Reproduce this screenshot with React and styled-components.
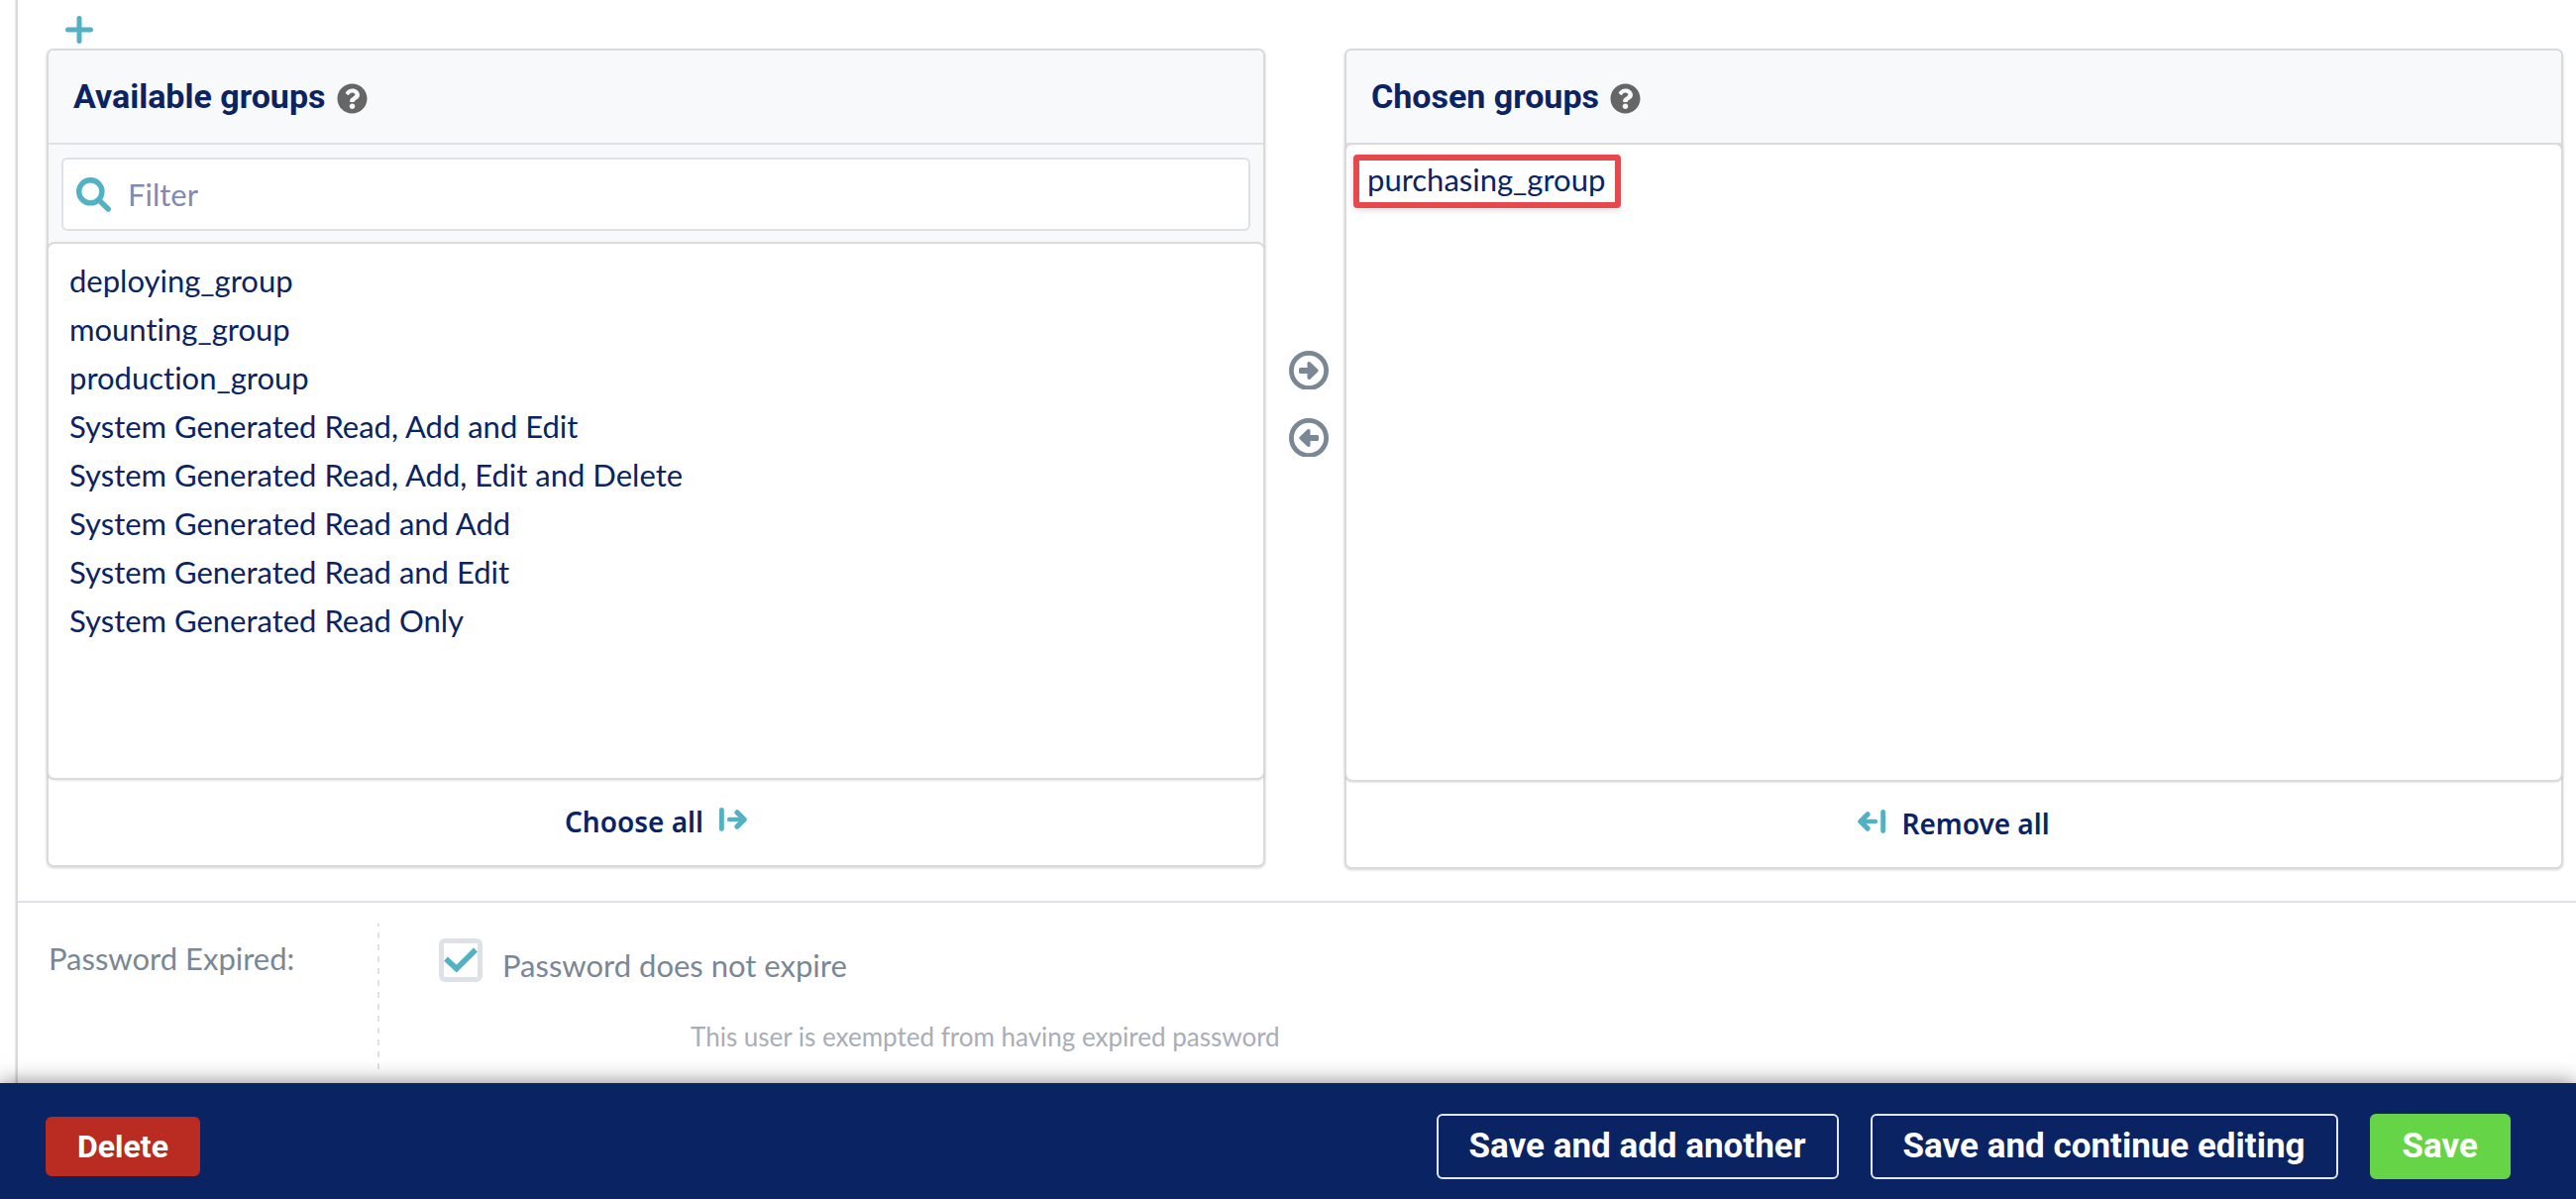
import React from 'react';
import styled, { createGlobalStyle } from 'styled-components';
import { FaQuestionCircle } from 'react-icons/fa';

const navy = '#0a2463';
const teal = '#52b2c3';
const slate = '#7a8794';
const line = '#dee2e6';
const edge = '#dadada';
const bodyFont = 'Lato, "Noto Sans", sans-serif';
const headFont = 'Roboto, "Noto Sans", sans-serif';

const GlobalStyle = createGlobalStyle`
  *, *::before, *::after { box-sizing: border-box; }
  body {
    margin: 0;
    background: #fff;
    color: ${navy};
    font-family: ${bodyFont};
    font-size: 31px;
    line-height: 38px;
    font-variant-ligatures: none;
  }
  svg { display: block; flex: none; }
`;

const Page = styled.div`
  display: flex;
  flex-direction: column;
  min-height: 100vh;
`;

const Form = styled.main`
  flex: 1;
  margin-left: 16px;
  border-left: 2px solid ${edge};
  box-shadow: -1px 0 1px rgba(0, 0, 0, 0.08);
`;

const IconButton = styled.button`
  display: block;
  padding: 0;
  border: 0;
  background: none;
  color: ${(p) => p.$color};
  cursor: pointer;
`;

const AddRow = styled.div`
  padding: 16px 48px 7px;
`;

const Selector = styled.section`
  display: flex;
  align-items: flex-start;
  padding: 0 15px 34px 31px;
  border-bottom: 2px solid ${line};
`;

const Panel = styled.div`
  flex: 1 1 0;
  min-width: 0;
  border-radius: 5px;
  background: #fff;
  box-shadow: 0 0 0 2px ${edge}, 0 1px 3px 2px rgba(0, 0, 0, 0.18);
`;

const PanelHeader = styled.header`
  display: flex;
  align-items: center;
  gap: 11px;
  height: 95px;
  padding: 0 25px;
  border-bottom: 2px solid ${line};
  border-radius: 5px 5px 0 0;
  background: #f8f9fb;
`;

const PanelTitle = styled.h2`
  margin: 0;
  padding-bottom: 2px;
  font: 700 34px/40px ${headFont};
`;

const HelpIcon = styled(FaQuestionCircle)`
  width: 31px;
  height: 31px;
  margin-top: 4px;
  color: #666;
`;

const FilterArea = styled.div`
  padding: 13px;
  background: #f8f9fb;
`;

const FilterBox = styled.label`
  display: flex;
  align-items: center;
  gap: 17px;
  height: 74px;
  padding: 0 13px;
  border: 2px solid ${line};
  border-radius: 6px;
  background: #fff;
`;

const FilterInput = styled.input`
  flex: 1;
  min-width: 0;
  padding: 0;
  border: 0;
  outline: 0;
  background: none;
  color: ${navy};
  font: 400 31px/38px ${bodyFont};
  &::placeholder { color: #7f8bb0; opacity: 1; }
`;

const GroupList = styled.select`
  display: block;
  position: relative;
  width: 100%;
  height: ${(p) => p.$height};
  padding: 10px 7px;
  border: 0;
  border-radius: 6px;
  outline: 0;
  overflow: hidden;
  appearance: none;
  background: #fff;
  box-shadow: 0 0 0 2px ${edge}, 0 1px 2px 2px rgba(0, 0, 0, 0.1);
  color: ${navy};
  font: 400 31px/38px ${bodyFont};
  font-variant-ligatures: none;
`;

const GroupOption = styled.option`
  height: 49px;
  padding: 8px 14px 4px;
`;

const MarkedOption = styled.option`
  width: fit-content;
  padding: 0 10px 4px 8px;
  border: 6px solid #e5484d;
  border-radius: 4px;
  box-shadow: 0 2px 6px rgba(0, 0, 0, 0.15);
`;

const PanelFooter = styled.footer`
  display: flex;
  align-items: center;
  justify-content: center;
  height: 88px;
`;

const AllLink = styled.a`
  display: flex;
  align-items: center;
  gap: 16px;
  color: ${navy};
  font: 600 28px/38px "Noto Sans", sans-serif;
  text-decoration: none;
`;

const Chooser = styled.div`
  display: flex;
  flex-direction: column;
  align-items: center;
  gap: 29px;
  width: 84px;
  padding: 303px 0 0 8px;
`;

const FieldRow = styled.section`
  display: flex;
  padding: 21px 31px 8px;
  color: ${slate};
`;

const FieldLabel = styled.div`
  width: 332px;
  padding-top: 16px;
`;

const Divider = styled.div`
  width: 2px;
  min-height: 153px;
  background: repeating-linear-gradient(${line} 0 3px, transparent 3px 9px, ${line} 9px 12px);
`;

const FieldBody = styled.div`
  padding: 15px 0 0 60px;
`;

const CheckLabel = styled.label`
  display: flex;
  gap: 20px;
`;

const CheckText = styled.span`
  padding-top: 8px;
`;

const CheckFrame = styled.span`
  display: grid;
  width: 44px;
  height: 44px;
  > * { grid-area: 1 / 1; }
  > svg { position: relative; pointer-events: none; visibility: hidden; }
  > input:checked + svg { visibility: visible; }
`;

const CheckInput = styled.input`
  width: 44px;
  height: 44px;
  margin: 0;
  appearance: none;
  border: 5px solid ${line};
  border-radius: 6px;
  background: #fff;
`;

const HelpText = styled.p`
  margin: 0;
  padding: 37px 0 0 254px;
  color: #a9adb8;
  font-size: 26px;
  line-height: 32px;
`;

const ActionBar = styled.footer`
  display: flex;
  align-items: center;
  position: relative;
  min-height: 117px;
  padding: 10px 66px 0 46px;
  background: ${navy};
  box-shadow: 0 0 20px rgba(0, 0, 0, 0.5);
`;

const ActionButton = styled.button`
  height: 66px;
  padding: 0 31px;
  border: 2px solid ${(p) => p.$border};
  border-radius: 6px;
  background: ${(p) => p.$fill};
  color: #fff;
  font: 700 35px/40px ${headFont};
  cursor: pointer;
`;

const DeleteButton = styled(ActionButton)`
  height: 60px;
  padding: 0 30px;
  font-size: 32px;
`;

const SaveGroup = styled.div`
  display: flex;
  gap: 32px;
  margin-left: auto;
`;

const PlusIcon = () => (
  <svg width="28" height="28" viewBox="0 0 28 28" fill="none" stroke="currentColor" strokeWidth="5" strokeLinecap="round">
    <path d="M14 2.5V25.5M2.5 14H25.5" />
  </svg>
);

const SearchIcon = () => (
  <svg width="35" height="35" viewBox="0 0 35 35" fill="none" stroke={teal} strokeWidth="5.4" strokeLinecap="round">
    <circle cx="14.3" cy="14.3" r="11.6" />
    <path d="M23 23L32.2 32" />
  </svg>
);

const CircleArrow = ({ left }) => (
  <svg width="40" height="39" viewBox="0 0 40 39" fill="none">
    <circle cx="20" cy="20" r="17.6" stroke="currentColor" strokeWidth="4.8" />
    <path
      transform={left ? 'translate(40 0) scale(-1 1)' : undefined}
      d="M11.5 17h7v-4.2c0-1.6 1.8-2.3 3-1.2l7.6 7.2c.8.7.8 1.7 0 2.4l-7.6 7.2c-1.2 1.1-3 .4-3-1.2V23h-7a1.5 1.5 0 0 1-1.5-1.5v-3a1.5 1.5 0 0 1 1.5-1.5z"
      fill="currentColor"
    />
  </svg>
);

const BarArrow = ({ left }) => (
  <svg width="28" height="28" viewBox="0 0 28 28" fill="none" stroke={teal} strokeLinecap="round" strokeLinejoin="round">
    <g transform={left ? 'translate(28 0) scale(-1 1)' : undefined}>
      <path d="M2.4 2.4V21.6" strokeWidth="4.8" />
      <path d="M10.2 12H24" strokeWidth="4.6" />
      <path d="M18 4.8L25.2 12L18 19.2" strokeWidth="5.2" />
    </g>
  </svg>
);

const CheckMark = () => (
  <svg width="44" height="44" viewBox="0 0 44 44" fill="none" stroke={teal} strokeWidth="5.6">
    <path d="M7 20.6L17.8 30.6L37 11.6" />
  </svg>
);

const available = [
  'deploying_group',
  'mounting_group',
  'production_group',
  'System Generated Read, Add and Edit',
  'System Generated Read, Add, Edit and Delete',
  'System Generated Read and Add',
  'System Generated Read and Edit',
  'System Generated Read Only',
];

export default function App() {
  return (
    <Page>
      <GlobalStyle />
      <Form>
        <AddRow>
          <IconButton type="button" aria-label="Add group" $color={teal}><PlusIcon /></IconButton>
        </AddRow>
        <Selector>
          <Panel>
            <PanelHeader>
              <PanelTitle id="available-title">Available groups</PanelTitle>
              <HelpIcon />
            </PanelHeader>
            <FilterArea>
              <FilterBox>
                <SearchIcon />
                <FilterInput type="text" placeholder="Filter" aria-label="Filter" />
              </FilterBox>
            </FilterArea>
            <GroupList multiple aria-labelledby="available-title" $height="539px">
              {available.map((name) => <GroupOption key={name}>{name}</GroupOption>)}
            </GroupList>
            <PanelFooter>
              <AllLink href="#choose-all">Choose all<BarArrow /></AllLink>
            </PanelFooter>
          </Panel>
          <Chooser>
            <IconButton type="button" aria-label="Choose" $color={slate}><CircleArrow /></IconButton>
            <IconButton type="button" aria-label="Remove" $color={slate}><CircleArrow left /></IconButton>
          </Chooser>
          <Panel>
            <PanelHeader>
              <PanelTitle id="chosen-title">Chosen groups</PanelTitle>
              <HelpIcon />
            </PanelHeader>
            <GroupList multiple aria-labelledby="chosen-title" $height="641px">
              <MarkedOption>purchasing_group</MarkedOption>
            </GroupList>
            <PanelFooter>
              <AllLink href="#remove-all"><BarArrow left />Remove all</AllLink>
            </PanelFooter>
          </Panel>
        </Selector>
        <FieldRow>
          <FieldLabel>Password Expired:</FieldLabel>
          <Divider />
          <FieldBody>
            <CheckLabel>
              <CheckFrame>
                <CheckInput type="checkbox" defaultChecked />
                <CheckMark />
              </CheckFrame>
              <CheckText>Password does not expire</CheckText>
            </CheckLabel>
            <HelpText>This user is exempted from having expired password</HelpText>
          </FieldBody>
        </FieldRow>
      </Form>
      <ActionBar>
        <DeleteButton type="button" $fill="#ba2b22" $border="#ba2b22">Delete</DeleteButton>
        <SaveGroup>
          <ActionButton type="submit" $fill="transparent" $border="#e4e7ee">Save and add another</ActionButton>
          <ActionButton type="submit" $fill="transparent" $border="#e4e7ee">Save and continue editing</ActionButton>
          <ActionButton type="submit" $fill="#66d447" $border="#66d447">Save</ActionButton>
        </SaveGroup>
      </ActionBar>
    </Page>
  );
}
